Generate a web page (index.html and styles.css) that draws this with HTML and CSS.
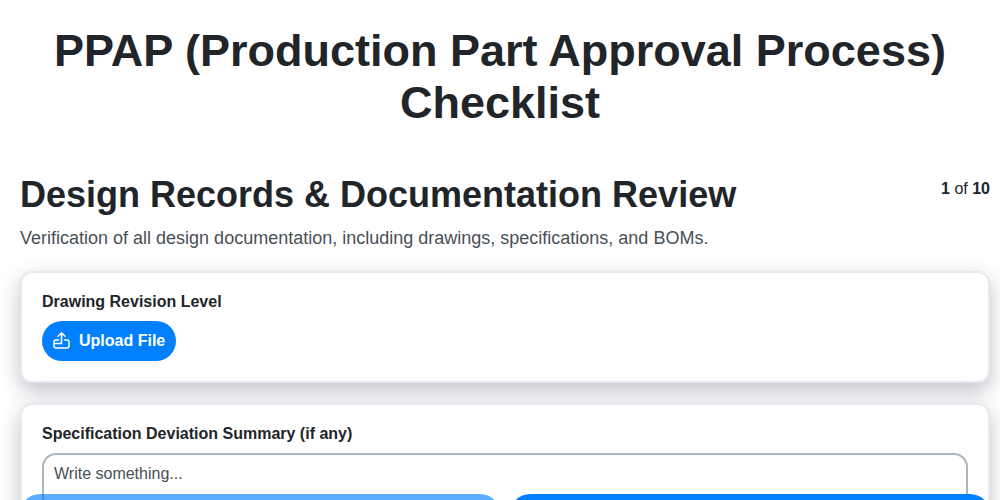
FILE: index.html
```html
<!DOCTYPE html>
<html>
<head>
    <title>PPAP Checklist</title>
    <link rel="stylesheet" href="styles.css">
</head>
<body>
    <h1 class="page-title">PPAP (Production Part Approval Process) Checklist</h1>

    <div class="section-head">
        <h2>Design Records &amp; Documentation Review</h2>
        <div class="step-count"><b>1</b> of <b>10</b></div>
    </div>
    <p class="section-desc">Verification of all design documentation, including drawings, specifications, and BOMs.</p>

    <div class="card">
        <label class="field-label">Drawing Revision Level</label>
        <button class="upload-btn">
            <svg class="upload-icon" viewBox="0 0 18 18" fill="none" stroke="currentColor" stroke-width="1.500" stroke-linecap="round" stroke-linejoin="round">
                <path d="M8.500 11.500V.8M5 4.300 8.500.8 12 4.300"/>
                <path d="M5.500 8H3a2 2 0 0 0-2 2v4a2 2 0 0 0 2 2h11a2 2 0 0 0 2-2v-4a2 2 0 0 0-2-2h-2.500"/>
                <path d="M1.500 11.500h7"/>
            </svg>
            Upload File
        </button>
    </div>

    <div class="card">
        <label class="field-label">Specification Deviation Summary (if any)</label>
        <textarea class="field-text" placeholder="Write something..."></textarea>
    </div>

    <div class="nav-buttons">
        <button class="nav-btn prev" disabled></button>
        <button class="nav-btn"></button>
    </div>
</body>
</html>
```

FILE: styles.css
```css
* {
    box-sizing: border-box;
}
body {
    font-family: "Liberation Sans", Arial, sans-serif;
    color: #212529;
    background: #fff;
    margin: 0;
    padding: 25px 10px 80px;
}
.page-title {
    margin: 0 0 45px;
    font-size: 45px;
    line-height: 52px;
    font-weight: 700;
    text-align: center;
}
.section-head {
    display: flex;
    justify-content: space-between;
    align-items: flex-start;
    padding-left: 10px;
}
h2 {
    margin: -1px 0 0;
    font-size: 36px;
    line-height: 43px;
    font-weight: 700;
}
.step-count {
    font-size: 16px;
    line-height: 18px;
    margin-top: 6px;
}
.section-desc {
    margin: 11px 0 22px 10px;
    font-size: 18px;
    line-height: 22px;
    color: #495057;
}
.card {
    margin: 0 0 20px 10px;
    padding: 20px;
    background: #fff;
    border: 2px solid #e8e8f1;
    border-radius: 12px;
    box-shadow: 0 8px 20px rgba(50, 50, 80, 0.3);
}
.field-label {
    display: block;
    font-size: 16px;
    line-height: 18px;
    font-weight: 700;
    margin-bottom: 10px;
}
.upload-btn {
    display: flex;
    align-items: center;
    gap: 8px;
    height: 40px;
    padding: 0 11px;
    border: none;
    border-radius: 20px;
    background: #0080ff;
    color: #fff;
    font-family: inherit;
    font-size: 16px;
    font-weight: 700;
}
.upload-icon {
    width: 18px;
    height: 18px;
}
.field-text {
    display: block;
    width: 100%;
    height: 120px;
    padding: 10px;
    border: 2px solid #adb5bd;
    border-radius: 14px;
    font-family: inherit;
    font-size: 16px;
    resize: none;
}
.field-text::placeholder {
    color: #495057;
    opacity: 1;
}
.nav-buttons {
    position: fixed;
    left: 20px;
    right: 10px;
    bottom: -34px;
    display: flex;
    gap: 10px;
}
.nav-btn {
    flex: 1;
    height: 40px;
    border: none;
    border-radius: 20px;
    background: #0080ff;
}
.nav-btn.prev {
    opacity: 0.65;
}
```
